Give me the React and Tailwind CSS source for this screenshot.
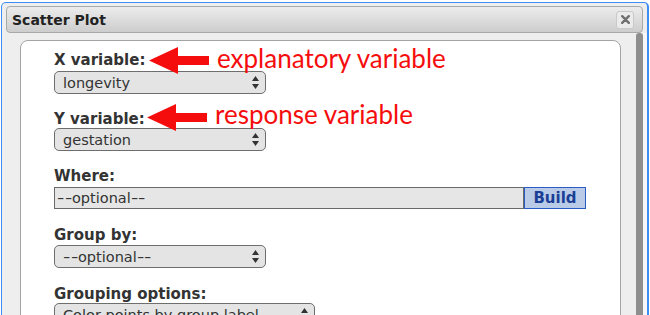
import React from "react";

function Arrows() {
  return (
    <svg width="7" height="13" viewBox="0 0 7 13" className="shrink-0">
      <polygon points="0,5 3.5,0 7,5" fill="#333" />
      <polygon points="0,8 3.5,13 7,8" fill="#333" />
    </svg>
  );
}

function Hy() {
  return <span className="inline-block w-[7.5px] scale-x-[1.4] origin-left">-</span>;
}

function Opt() {
  return (
    <span className="whitespace-nowrap">
      <Hy />
      <Hy />
      optional
      <Hy />
      <Hy />
    </span>
  );
}

function RedArrow({ className }) {
  return (
    <svg width="60" height="27" viewBox="0 0 60 27" className={className}>
      <polygon points="0,13.5 29,0 29,9 60,9 60,18 29,18 29,27" fill="#f50d0d" />
    </svg>
  );
}

export default function App() {
  const font = { fontFamily: '"DejaVu Sans", Verdana, sans-serif' };
  return (
    <div className="w-[650px] h-[315px] overflow-hidden bg-white" style={font}>
      <div className="h-[2px] overflow-hidden flex justify-center">
        <div className="-mt-[12px] font-bold text-[14px] leading-[14px] text-[#333]">Variable Build</div>
      </div>
      <div className="ml-[1px] w-[648px] h-[400px] border-l border-t border-r-2 border-[#3d8df2] rounded-t-[5px] bg-[#eeeeee] flex flex-col">
        <div className="mx-[4px] mt-[3px] h-[27px] shrink-0 rounded-[4px] border border-[#a9a9a9] bg-gradient-to-b from-[#ececec] to-[#cdcdcd] flex items-center justify-between pl-[5px] pr-[8px]">
          <div className="font-bold text-[14px] leading-[16px] text-[#222]">Scatter Plot</div>
          <div className="w-[18px] h-[18px] rounded-[3px] border border-[#c9c9c9] bg-[#ebebeb] flex items-center justify-center">
            <svg width="9" height="9" viewBox="0 0 9 9">
              <path d="M1.2 1.2 L7.8 7.8 M7.8 1.2 L1.2 7.8" stroke="#707070" strokeWidth="2.4" strokeLinecap="round" />
            </svg>
          </div>
        </div>
        <div className="flex flex-1">
          <div className="flex-1 pl-[18px] pr-[15px] pt-[7px]">
            <div className="relative h-[300px] bg-white border border-[#a4a4a4] rounded-t-[8px] pl-[33px] pt-[11px] text-[#333]">
              <div className="font-bold text-[15px] leading-[16px]">X variable:</div>
              <div className="mt-[3px] w-[212px] h-[23px] rounded-[5px] border border-[#6e6e6e] bg-[#e4e4e4] pl-[8px] pr-[6px] flex items-center justify-between text-[14.5px] leading-[16px]">
                <span>longevity</span>
                <Arrows />
              </div>

              <div className="mt-[17px] font-bold text-[15px] leading-[16px]">Y variable:</div>
              <div className="mt-[1px] w-[212px] h-[23px] rounded-[5px] border border-[#6e6e6e] bg-[#e4e4e4] pl-[8px] pr-[6px] flex items-center justify-between text-[14.5px] leading-[16px]">
                <span>gestation</span>
                <Arrows />
              </div>

              <div className="mt-[17px] font-bold text-[15px] leading-[16px]">Where:</div>
              <div className="mt-[3px] flex h-[22px]">
                <div className="w-[470px] border border-[#6a6a6a] bg-[#e6e6e6] pl-[2px] flex items-center text-[14.5px] leading-[16px]">
                  <Opt />
                </div>
                <div className="w-[62px] border border-[#2a5cc4] bg-[#b9cbe7] flex items-center justify-center font-bold text-[15px] leading-[16px] text-[#1b3f96]">
                  Build
                </div>
              </div>

              <div className="mt-[18px] font-bold text-[15px] leading-[16px]">Group by:</div>
              <div className="mt-[2px] w-[212px] h-[23px] rounded-[5px] border border-[#6e6e6e] bg-[#e4e4e4] pl-[8px] pr-[6px] flex items-center justify-between text-[14.5px] leading-[16px]">
                <Opt />
                <Arrows />
              </div>

              <div className="mt-[18px] font-bold text-[15px] leading-[16px]">Grouping options:</div>
              <div className="mt-[1px] w-[261px] h-[23px] rounded-[5px] border border-[#6e6e6e] bg-[#e4e4e4] pl-[8px] pr-[6px] flex items-center justify-between text-[14.5px] leading-[16px]">
                <span>Color points by group label</span>
                <Arrows />
              </div>

              <RedArrow className="absolute left-[128px] top-[6px]" />
              <div className="absolute left-[196px] top-[2px] text-[26px] leading-[30px] text-[#f50d0d]" style={{ fontFamily: 'Lato, sans-serif' }}>
                explanatory variable
              </div>
              <RedArrow className="absolute left-[126px] top-[63px]" />
              <div className="absolute left-[194px] top-[58px] text-[26px] leading-[30px] text-[#f50d0d]" style={{ fontFamily: 'Lato, sans-serif' }}>
                response variable
              </div>
            </div>
          </div>
          <div className="w-[7px] bg-[#8e8e8e] rounded-t-[3px]" />
          <div className="w-[4px] bg-[#f7f7f7]" />
        </div>
      </div>
    </div>
  );
}
